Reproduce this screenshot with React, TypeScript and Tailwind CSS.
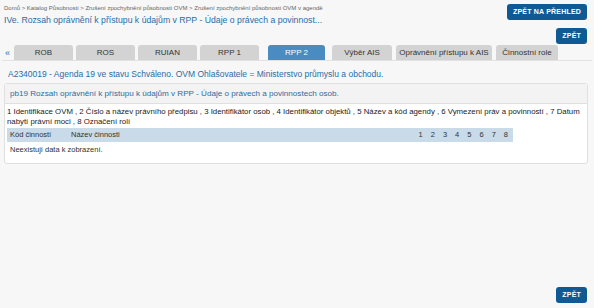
import React from "react";

const tabs = ["ROB", "ROS", "RUIAN", "RPP 1"];

function Btn({ children }: { children: React.ReactNode }) {
  return (
    <button className="h-[16px] rounded-[3px] bg-[#0f5a94] px-[6px] text-[7px] font-bold leading-[16px] tracking-[0.2px] text-white">
      {children}
    </button>
  );
}

export default function App() {
  return (
    <div
      className="flex h-[308px] w-[594px] flex-col overflow-hidden bg-[#f7f7f7] text-[#333]"
      style={{ fontFamily: '"Liberation Sans", Arial, sans-serif' }}
    >
      <div className="flex justify-between px-[4px] pt-[4px] pr-[7px]">
        <div>
          <div className="text-[6px] leading-[8px] text-[#666]">
            Domů &gt; Katalog Působnosti &gt; Zrušení zpochybnění působnosti OVM &gt; Zrušení zpochybnění působnosti OVM v agendě
          </div>
          <div className="mt-[3px] text-[8.7px] leading-[11px] text-[#2b6ca3]">
            IVe. Rozsah oprávnění k přístupu k údajům v RPP - Údaje o právech a povinnost...
          </div>
        </div>
        <div className="flex flex-col items-end gap-[8px]">
          <Btn>ZPĚT NA PŘEHLED</Btn>
          <Btn>ZPĚT</Btn>
        </div>
      </div>

      <div className="mx-[2px] mt-[1px] flex items-end border-b border-[#e2e2e2] pr-[7px]">
        <span className="mr-[4px] ml-[3px] pb-[1px] text-[9px] leading-[12px] text-[#2b6ca3]">«</span>
        {tabs.map((t) => (
          <div
            key={t}
            className="mr-[3px] flex h-[15px] w-[59px] items-center justify-center rounded-t-[3px] bg-[#d3d3d3] text-[8px] text-[#333]"
          >
            {t}
          </div>
        ))}
        <div className="mr-[7px] ml-[6px] flex h-[15px] w-[57px] items-center justify-center rounded-t-[3px] bg-[#4a8bc2] text-[8px] text-white">
          RPP 2
        </div>
        <div className="mr-[4px] flex h-[15px] w-[60px] items-center justify-center rounded-t-[3px] bg-[#d3d3d3] text-[8px] text-[#333]">
          Výběr AIS
        </div>
        <div className="mr-[4px] flex h-[15px] w-[96px] items-center justify-center rounded-t-[3px] bg-[#d3d3d3] text-[8px] text-[#333]">
          Oprávnění přístupu k AIS
        </div>
        <div className="flex h-[15px] w-[62px] items-center justify-center rounded-t-[3px] bg-[#d3d3d3] text-[8px] text-[#333]">
          Činnostní role
        </div>
      </div>

      <div className="mt-[8px] pl-[8px] text-[8.5px] leading-[11px] text-[#2b6ca3]">
        A2340019 - Agenda 19 ve stavu Schváleno. OVM Ohlašovatele = Ministerstvo průmyslu a obchodu.
      </div>

      <div className="mx-[4px] mt-[3px] mr-[6px] rounded-[3px] border border-[#e0e0e0] bg-white">
        <div className="border-b border-[#e0e0e0] bg-[#f3f3f3] px-[5px] py-[4px] text-[8.1px] leading-[11px] text-[#2b6ca3]">
          pb19 Rozsah oprávnění k přístupu k údajům v RPP - Údaje o právech a povinnostech osob.
        </div>
        <div className="px-[2px] pt-[3px] pb-[8px]">
          <div className="text-[7.8px] leading-[10px] text-[#222]">
            1 Identifikace OVM , 2 Číslo a název právního předpisu , 3 Identifikátor osob , 4 Identifikátor objektů , 5 Název a kód agendy , 6 Vymezení práv a povinností , 7 Datum nabytí právní moci , 8 Označení rolí
          </div>
          <div className="mt-[1px] flex h-[14px] w-[506px] items-center bg-[#c9dae8] text-[7.5px] text-[#333]">
            <span className="w-[64px] pl-[3px]">Kód činnosti</span>
            <span className="flex-1">Název činnosti</span>
            <span className="flex pr-[1px]">
              {[1, 2, 3, 4, 5, 6, 7, 8].map((n) => (
                <span key={n} className="w-[12.2px] text-center">
                  {n}
                </span>
              ))}
            </span>
          </div>
          <div className="mt-[3px] pl-[3px] text-[7.5px] leading-[10px] text-[#333]">Neexistují data k zobrazení.</div>
        </div>
      </div>

      <div className="mt-auto flex justify-end pr-[7px] pb-[5px]">
        <Btn>ZPĚT</Btn>
      </div>
    </div>
  );
}
